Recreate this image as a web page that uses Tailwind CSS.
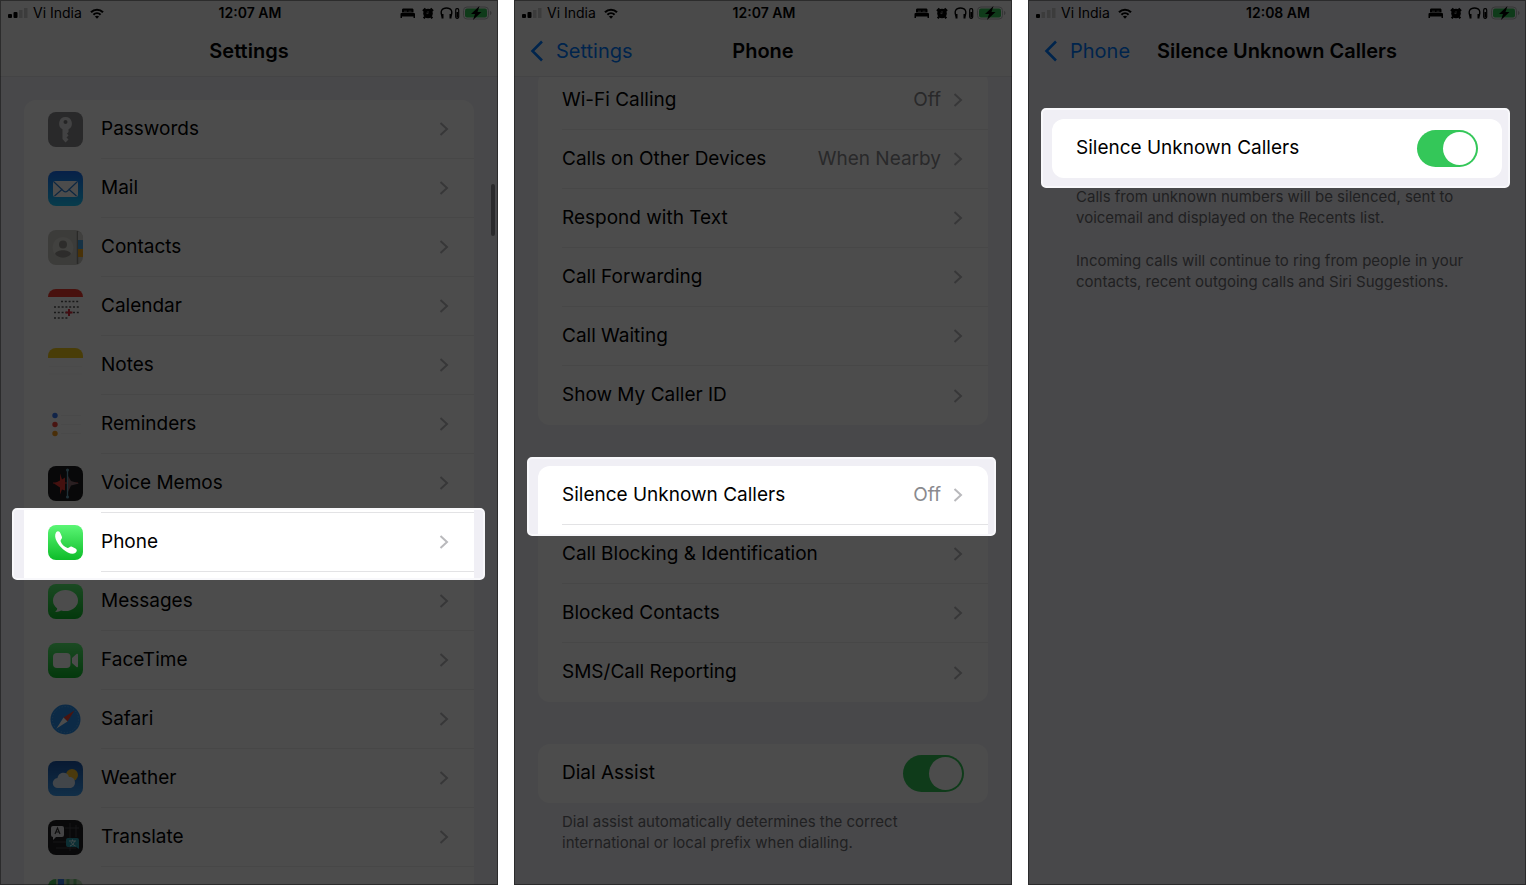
<!DOCTYPE html>
<html lang="en">
<head>
    <meta charset="UTF-8">
    <meta name="viewport" content="width=device-width, initial-scale=1.0">
    <title>Silence Unknown Callers</title>
    <script src="https://cdn.jsdelivr.net/npm/@tailwindcss/browser@4"></script>
</head>
<body class="bg-white font-[Inter,sans-serif] text-black">

    <!-- shared icons -->
    <svg class="absolute size-0">
        <symbol id="wifi" viewBox="0 0 14 11">
            <path d="M1 4.2C4.4.9 9.6.9 13 4.2" fill="none" stroke="currentColor" stroke-width="2.200"/>
            <path d="M3.4 6.8c2-2 5.2-2 7.2 0" fill="none" stroke="currentColor" stroke-width="2"/>
            <path d="M7 10.8 4.9 8.6c1.2-1 3-1 4.2 0z" fill="currentColor"/>
        </symbol>
        <symbol id="status" viewBox="0 0 92 14">
            <path d="M3.500 2.500h8.500c1 0 1.500.5 1.500 1.500v2.500H2V4c0-1 .5-1.500 1.500-1.500zM1.500 7h12.500a1 1 0 0 1 1 1v4h-1.500v-1.500H2V12H.5V8a1 1 0 0 1 1-1z" fill="currentColor"/>
            <path d="M4 5.200h3M8.500 5.200h3" stroke="#999" stroke-width=".8"/>
            <circle cx="28" cy="7.500" r="4.800" fill="currentColor"/>
            <path d="M23 5l2.500-2.500M33 5l-2.500-2.500M25 10.500l-1.200 1.800M31 10.500l1.200 1.800" stroke="currentColor" stroke-width="2.200"/>
            <path d="M28 5v2.800l-1.800-.8" fill="none" stroke="#999" stroke-width=".8"/>
            <path d="M42.500 11C39.500 5 42 2 46.500 2s7 3 4 9" fill="none" stroke="currentColor" stroke-width="1.400"/>
            <path d="M42.500 8v4.500M50.500 8v4.500" stroke="currentColor" stroke-width="2"/>
            <rect x="55.700" y="2.700" width="3" height="9.600" rx="1.200" fill="none" stroke="currentColor" stroke-width="1.200"/>
            <path d="M57.200 6v5.500" stroke="currentColor" stroke-width="1.600"/>
            <rect x="63.500" y="1" width="25" height="12" rx="3.500" fill="none" stroke="#b5b5b8"/>
            <rect x="65" y="2.500" width="22" height="9" rx="2" fill="#34c759"/>
            <path d="M90 5c2 .5 2 3.500 0 4z" fill="#b5b5b8"/>
            <path d="M79.500 0l-8.500 8h4l-2 6 8.500-8h-4z" fill="currentColor"/>
        </symbol>
        <symbol id="chevron" viewBox="0 0 10 16">
            <path d="M1.500 2l6.500 6-6.500 6" fill="none" stroke="currentColor" stroke-width="2"/>
        </symbol>
        <symbol id="back" viewBox="0 0 14 22">
            <path d="M12 1.500L2.500 11 12 20.500" fill="none" stroke="currentColor" stroke-width="2.600"/>
        </symbol>
        <linearGradient id="green" x2="0" y2="1"><stop stop-color="#5bf675"/><stop offset="1" stop-color="#0dbc29"/></linearGradient>
        <linearGradient id="blue" x2="0" y2="1"><stop stop-color="#1a6df0"/><stop offset="1" stop-color="#1ac8fc"/></linearGradient>
        <linearGradient id="sky" x2="0" y2="1"><stop stop-color="#1c56a8"/><stop offset="1" stop-color="#3a9cf0"/></linearGradient>
    </svg>

    <main class="flex h-screen gap-4 overflow-hidden">

        <!-- Settings -->
        <section class="relative isolate min-w-0 flex-1 overflow-hidden bg-[#f2f2f7]">
            <header class="relative z-5 h-[77px] border-b border-[#e4e4e6] bg-[#f9f9f9]">
                <div class="grid h-[26px] grid-cols-[1fr_auto_1fr] items-center pr-[6px] pl-2 text-sm">
                    <div class="flex items-center gap-2">
                        <div class="flex items-center gap-1">
                            <svg class="h-3 w-5" viewBox="0 0 20 12"><rect y="7" width="4" height="4" rx="1"/><rect x="5.500" y="5" width="4" height="6" rx="1"/><path d="M11 3h3.500v8H11zM16 1h3.500v10H16z" fill="#c8c8ca"/></svg>
                            <span class="ml-px">Vi India</span>
                        </div>
                        <svg class="h-[11px] w-[14px]"><use href="#wifi"/></svg>
                    </div>
                    <span class="font-semibold">12:07 AM</span>
                    <svg class="h-[14px] w-[92px] justify-self-end"><use href="#status"/></svg>
                </div>
                <h1 class="flex h-[50px] items-center justify-center text-xl font-semibold">Settings</h1>
            </header>

            <nav class="mx-6 mt-[23px] rounded-xl bg-white text-[19px]">
                <a href="#" class="flex h-[59px] items-center pl-6">
                    <svg class="size-[35px]" viewBox="0 0 35 35"><rect width="35" height="35" rx="8" fill="#8a8a8d"/><path d="M17.500 5a6.500 6.500 0 0 0-3 12.200V27l3 3.500 3-3-2-2 2-2-1.500-2 1.500-1.500v-2.800A6.500 6.500 0 0 0 17.500 5z" fill="#dededf"/><circle cx="17.500" cy="10" r="2" fill="#7b7b7d"/></svg>
                    <span class="ml-[18px] flex h-full flex-1 items-center justify-between border-b border-[#eeeeef] pr-[25px]">Passwords<svg class="h-4 w-[10px] text-[#b9b9bc]"><use href="#chevron"/></svg></span>
                </a>
                <a href="#" class="flex h-[59px] items-center pl-6">
                    <svg class="size-[35px]" viewBox="0 0 35 35"><rect width="35" height="35" rx="8" fill="url(#blue)"/><rect x="5" y="10" width="25" height="16" rx="2.500" fill="#fff"/><path d="M6 11l9.500 9c1.300 1.200 2.700 1.200 4 0L29 11M6.500 25l8-7M28.500 25l-8-7" fill="none" stroke="#2a80d8" stroke-width="1.200"/></svg>
                    <span class="ml-[18px] flex h-full flex-1 items-center justify-between border-b border-[#eeeeef] pr-[25px]">Mail<svg class="h-4 w-[10px] text-[#b9b9bc]"><use href="#chevron"/></svg></span>
                </a>
                <a href="#" class="flex h-[59px] items-center pl-6">
                    <svg class="size-[35px]" viewBox="0 0 35 35"><rect width="35" height="35" rx="8" fill="#c9c8c2"/><path d="M29.500 1v33" stroke="#8e8d88" stroke-width="1.500"/><path d="M30 1.500c3 1 5 3.500 5 7V10h-5z" fill="#d5d5d2"/><path d="M30 10h5v9h-5z" fill="#4aa7e8"/><path d="M30 19h5v8h-5z" fill="#f3a71c"/><circle cx="15" cy="17.500" r="10.500" fill="#dad9d2"/><circle cx="15" cy="14.500" r="4" fill="#96958f"/><path d="M7 24c1.500-5 14.500-5 16 0-4 5-12 5-16 0z" fill="#96958f"/></svg>
                    <span class="ml-[18px] flex h-full flex-1 items-center justify-between border-b border-[#eeeeef] pr-[25px]">Contacts<svg class="h-4 w-[10px] text-[#b9b9bc]"><use href="#chevron"/></svg></span>
                </a>
                <a href="#" class="flex h-[59px] items-center pl-6">
                    <svg class="size-[35px]" viewBox="0 0 35 35"><rect width="35" height="35" rx="8" fill="#fff"/><path d="M0 8a8 8 0 0 1 8-8h19a8 8 0 0 1 8 8z" fill="#f0392f"/><path d="M13 12.500h18M6 18h25M6 23.500h25M6 29h15" stroke="#555" stroke-width="1.500" stroke-dasharray="2 1.800"/><path d="M21 20v7M17.500 23.500h7" stroke="#e02c3c" stroke-width="2"/></svg>
                    <span class="ml-[18px] flex h-full flex-1 items-center justify-between border-b border-[#eeeeef] pr-[25px]">Calendar<svg class="h-4 w-[10px] text-[#b9b9bc]"><use href="#chevron"/></svg></span>
                </a>
                <a href="#" class="flex h-[59px] items-center pl-6">
                    <svg class="size-[35px]" viewBox="0 0 35 35"><rect width="35" height="35" rx="8" fill="#fff"/><path d="M0 10V8a8 8 0 0 1 8-8h19a8 8 0 0 1 8 8v2z" fill="#f4cc1c"/><path d="M1 18.500h33M1 26h33" stroke="#f7f7f7"/></svg>
                    <span class="ml-[18px] flex h-full flex-1 items-center justify-between border-b border-[#eeeeef] pr-[25px]">Notes<svg class="h-4 w-[10px] text-[#b9b9bc]"><use href="#chevron"/></svg></span>
                </a>
                <a href="#" class="flex h-[59px] items-center pl-6">
                    <svg class="size-[35px]" viewBox="0 0 35 35"><rect width="35" height="35" rx="8" fill="#fff"/><circle cx="7" cy="8.500" r="2.700" fill="#3a78f0"/><circle cx="7" cy="17.500" r="2.700" fill="#f0463c"/><circle cx="7" cy="26.500" r="2.700" fill="#f39a1c"/><path d="M13 8.500h20M13 17.500h20M13 26.500h20" stroke="#f5f5f6"/></svg>
                    <span class="ml-[18px] flex h-full flex-1 items-center justify-between border-b border-[#eeeeef] pr-[25px]">Reminders<svg class="h-4 w-[10px] text-[#b9b9bc]"><use href="#chevron"/></svg></span>
                </a>
                <a href="#" class="flex h-[59px] items-center pl-6">
                    <svg class="size-[35px]" viewBox="0 0 35 35"><rect width="35" height="35" rx="8" fill="#1c1c20"/><path d="M5 17h25" stroke="#a53030" stroke-width="1.500"/><path d="M6 17.500l6-3v-7l2 6 3-2v13l-3-1-2 5v-7z" fill="#e83a32"/><path d="M19.500 3v29" stroke="#6ba5ba" stroke-width="1.300"/><path d="M20 10l3 5 8 2.500-8 2L20 26z" fill="#8a6a70"/><circle cx="19.500" cy="4" r="1.500" fill="#6ba5ba"/><circle cx="19.500" cy="31" r="1.500" fill="#6ba5ba"/></svg>
                    <span class="ml-[18px] flex h-full flex-1 items-center justify-between border-b border-[#eeeeef] pr-[25px]">Voice Memos<svg class="h-4 w-[10px] text-[#b9b9bc]"><use href="#chevron"/></svg></span>
                </a>

                <!-- highlighted row -->
                <div class="relative z-20">
                    <div class="absolute -top-[5px] -right-[11px] -bottom-[8px] -left-[12px] rounded-[5px] border-2 border-[#f8f8fb] bg-[#f0eff5] pr-[9px] pl-[10px]">
                        <div class="h-full border-t-2 border-white bg-white"><div class="ml-[77px] h-px bg-[#e3e3e5]"></div></div>
                    </div>
                    <a href="#" class="relative flex h-[59px] items-center pl-6">
                        <svg class="size-[35px]" viewBox="0 0 35 35"><rect width="35" height="35" rx="8" fill="url(#green)"/><path d="M8 7.500c1.500-2 3.500-1.500 4.500 1l1.500 3.500c.5 1.500-1.500 2.500-1.500 4 1 3.500 3.500 5.500 7 7 1.500.3 2.500-2 4-1.500l4 2c2 1 1.500 3 0 4.200-3 2.300-8 .3-12.500-3.500S5 12.500 8 7.500z" fill="#fff"/></svg>
                        <span class="ml-[18px] flex h-full flex-1 items-center justify-between border-b border-[#e3e3e5] pr-[25px]">Phone<svg class="h-4 w-[10px] text-[#b9b9bc]"><use href="#chevron"/></svg></span>
                    </a>
                </div>

                <a href="#" class="flex h-[59px] items-center pl-6">
                    <svg class="size-[35px]" viewBox="0 0 35 35"><rect width="35" height="35" rx="8" fill="url(#green)"/><ellipse cx="17.500" cy="16.500" rx="12.500" ry="10.500" fill="#fff"/><path d="M9 22c1 3-.5 5-2 6 3.500 0 6-1 8-3z" fill="#fff"/></svg>
                    <span class="ml-[18px] flex h-full flex-1 items-center justify-between border-b border-[#eeeeef] pr-[25px]">Messages<svg class="h-4 w-[10px] text-[#b9b9bc]"><use href="#chevron"/></svg></span>
                </a>
                <a href="#" class="flex h-[59px] items-center pl-6">
                    <svg class="size-[35px]" viewBox="0 0 35 35"><rect width="35" height="35" rx="8" fill="url(#green)"/><rect x="5" y="10" width="17.500" height="15" rx="4" fill="#fff"/><path d="M24 15l4.500-4c.8-.6 1.500-.3 1.500.7v11.600c0 1-.7 1.300-1.500.7L24 20z" fill="#fff"/></svg>
                    <span class="ml-[18px] flex h-full flex-1 items-center justify-between border-b border-[#eeeeef] pr-[25px]">FaceTime<svg class="h-4 w-[10px] text-[#b9b9bc]"><use href="#chevron"/></svg></span>
                </a>
                <a href="#" class="flex h-[59px] items-center pl-6">
                    <svg class="size-[35px]" viewBox="0 0 35 35"><rect width="35" height="35" rx="8" fill="#fff"/><circle cx="17.500" cy="17.500" r="15" fill="#2a8eea"/><circle cx="17.500" cy="17.500" r="13" fill="none" stroke="#5fb5f5" stroke-dasharray="1 2"/><path d="M26.500 8.500L15.500 15.500l4 4z" fill="#f04438"/><path d="M8.500 26.500l7-11 4 4z" fill="#fff"/></svg>
                    <span class="ml-[18px] flex h-full flex-1 items-center justify-between border-b border-[#eeeeef] pr-[25px]">Safari<svg class="h-4 w-[10px] text-[#b9b9bc]"><use href="#chevron"/></svg></span>
                </a>
                <a href="#" class="flex h-[59px] items-center pl-6">
                    <svg class="size-[35px]" viewBox="0 0 35 35"><rect width="35" height="35" rx="8" fill="url(#sky)"/><circle cx="24" cy="14" r="6" fill="#fbc22c"/><path d="M10 27a5 5 0 0 1-.5-10c1-6.500 10-7 11.500-1 3.500-.5 6 2 6 5.500 0 3-2 5.500-5 5.500z" fill="#dce9f7"/></svg>
                    <span class="ml-[18px] flex h-full flex-1 items-center justify-between border-b border-[#eeeeef] pr-[25px]">Weather<svg class="h-4 w-[10px] text-[#b9b9bc]"><use href="#chevron"/></svg></span>
                </a>
                <a href="#" class="flex h-[59px] items-center pl-6">
                    <svg class="size-[35px]" viewBox="0 0 35 35"><rect width="35" height="35" rx="8" fill="#202022"/><path d="M17 8h14M22 3v28M5 22h14M8 28h20M28 5v12" stroke="#4b4b4e"/><path d="M5 6h9a2 2 0 0 1 2 2v7a2 2 0 0 1-2 2H8l-3 3v-3a2 2 0 0 1-2-2V8a2 2 0 0 1 2-2z" fill="#e5e5e7"/><path d="M7 14l2.500-6 2.500 6M8 12h3" fill="none" stroke="#333" stroke-width="1.200"/><path d="M20 18h9a2 2 0 0 1 2 2v9l-3-2h-8a2 2 0 0 1-2-2v-5a2 2 0 0 1 2-2z" fill="#2a9fb0"/><path d="M21 21h7M24.500 19.500V21M22 26c3-1 4-3 4.500-5M23 22c1 2 3 3.500 4.500 4" fill="none" stroke="#d5f2f5"/></svg>
                    <span class="ml-[18px] flex h-full flex-1 items-center justify-between border-b border-[#eeeeef] pr-[25px]">Translate<svg class="h-4 w-[10px] text-[#b9b9bc]"><use href="#chevron"/></svg></span>
                </a>
                <a href="#" aria-label="Maps" class="flex h-[59px] items-center pl-6">
                    <svg class="size-[35px]" viewBox="0 0 35 35"><rect width="35" height="35" rx="8" fill="#b9dcb5"/><path d="M0 35V8a8 8 0 0 1 8-8v35z" fill="#4cc35c"/><path d="M10 0h6v35h-6z" fill="#3a7de8"/><path d="M20 0v35M27 0v35" stroke="#6fc478" stroke-width="3"/></svg>
                </a>
            </nav>

            <div class="absolute top-[184px] right-[3px] h-[52px] w-1 rounded-full bg-[#8e8e93]"></div>
            <div class="pointer-events-none absolute inset-0 z-10 border border-black/40 bg-black/70"></div>
        </section>

        <!-- Phone -->
        <section class="relative isolate min-w-0 flex-1 overflow-hidden bg-[#f2f2f7]">
            <header class="relative z-5 h-[77px] border-b border-[#e4e4e6] bg-[#f9f9f9]">
                <div class="grid h-[26px] grid-cols-[1fr_auto_1fr] items-center pr-[6px] pl-2 text-sm">
                    <div class="flex items-center gap-2">
                        <div class="flex items-center gap-1">
                            <svg class="h-3 w-5" viewBox="0 0 20 12"><rect y="7" width="4" height="4" rx="1"/><rect x="5.500" y="5" width="4" height="6" rx="1"/><path d="M11 3h3.500v8H11zM16 1h3.500v10H16z" fill="#c8c8ca"/></svg>
                            <span class="ml-px">Vi India</span>
                        </div>
                        <svg class="h-[11px] w-[14px]"><use href="#wifi"/></svg>
                    </div>
                    <span class="font-semibold">12:07 AM</span>
                    <svg class="h-[14px] w-[92px] justify-self-end"><use href="#status"/></svg>
                </div>
                <div class="grid h-[50px] grid-cols-[1fr_auto_1fr] items-center px-4 text-xl">
                    <a href="#" class="flex items-center gap-3 text-[#007aff]"><svg class="h-[22px] w-[14px]"><use href="#back"/></svg>Settings</a>
                    <h1 class="font-semibold">Phone</h1>
                </div>
            </header>

            <nav class="mx-6 -mt-[6px] rounded-xl bg-white pl-6 text-[19px]">
                <a href="#" class="flex h-[59px] items-center border-b border-[#eeeeef] pr-[25px]">Wi-Fi Calling<span class="mr-3 ml-auto text-[#8a8a8e]">Off</span><svg class="h-4 w-[10px] text-[#b9b9bc]"><use href="#chevron"/></svg></a>
                <a href="#" class="flex h-[59px] items-center border-b border-[#eeeeef] pr-[25px]">Calls on Other Devices<span class="mr-3 ml-auto text-[#8a8a8e]">When Nearby</span><svg class="h-4 w-[10px] text-[#b9b9bc]"><use href="#chevron"/></svg></a>
                <a href="#" class="flex h-[59px] items-center justify-between border-b border-[#eeeeef] pr-[25px]">Respond with Text<svg class="h-4 w-[10px] text-[#b9b9bc]"><use href="#chevron"/></svg></a>
                <a href="#" class="flex h-[59px] items-center justify-between border-b border-[#eeeeef] pr-[25px]">Call Forwarding<svg class="h-4 w-[10px] text-[#b9b9bc]"><use href="#chevron"/></svg></a>
                <a href="#" class="flex h-[59px] items-center justify-between border-b border-[#eeeeef] pr-[25px]">Call Waiting<svg class="h-4 w-[10px] text-[#b9b9bc]"><use href="#chevron"/></svg></a>
                <a href="#" class="flex h-[59px] items-center justify-between pr-[25px]">Show My Caller ID<svg class="h-4 w-[10px] text-[#b9b9bc]"><use href="#chevron"/></svg></a>
            </nav>

            <nav class="mx-6 mt-[41px] rounded-xl bg-white text-[19px]">
                <!-- highlighted row -->
                <div class="relative z-20">
                    <div class="absolute -top-[9px] -right-[8px] -bottom-[11px] -left-[11px] rounded-[5px] border-2 border-[#f8f8fb] bg-[#f0eff5] pt-[7px] pr-[6px] pl-[9px]">
                        <div class="h-full rounded-t-xl bg-white"></div>
                    </div>
                    <div class="relative pl-6">
                        <a href="#" class="flex h-[59px] items-center border-b border-[#e3e3e5] pr-[25px]">Silence Unknown Callers<span class="mr-3 ml-auto text-[#8a8a8e]">Off</span><svg class="h-4 w-[10px] text-[#b9b9bc]"><use href="#chevron"/></svg></a>
                    </div>
                </div>
                <div class="pl-6">
                    <a href="#" class="flex h-[59px] items-center justify-between border-b border-[#eeeeef] pr-[25px]">Call Blocking &amp; Identification<svg class="h-4 w-[10px] text-[#b9b9bc]"><use href="#chevron"/></svg></a>
                    <a href="#" class="flex h-[59px] items-center justify-between border-b border-[#eeeeef] pr-[25px]">Blocked Contacts<svg class="h-4 w-[10px] text-[#b9b9bc]"><use href="#chevron"/></svg></a>
                    <a href="#" class="flex h-[59px] items-center justify-between pr-[25px]">SMS/Call Reporting<svg class="h-4 w-[10px] text-[#b9b9bc]"><use href="#chevron"/></svg></a>
                </div>
            </nav>

            <div class="mx-6 mt-[42px] flex h-[59px] items-center justify-between rounded-xl bg-white pr-6 pl-6 text-[19px]">
                <label for="dial-assist">Dial Assist</label>
                <input id="dial-assist" type="checkbox" role="switch" checked class="relative h-[37px] w-[61px] appearance-none rounded-full bg-[#b9b9bc] before:absolute before:top-[2px] before:left-[2px] before:size-[33px] before:rounded-full before:bg-white checked:bg-[#34c759] checked:before:left-[26px]">
            </div>
            <p class="mx-12 mt-2 text-[15px] leading-[21px] text-[#6d6d72]">Dial assist automatically determines the correct<br>international or local prefix when dialling.</p>

            <div class="pointer-events-none absolute inset-0 z-10 border border-black/40 bg-black/70"></div>
        </section>

        <!-- Silence Unknown Callers -->
        <section class="relative isolate min-w-0 flex-1 overflow-hidden bg-[#f2f2f7]">
            <header class="h-[77px]">
                <div class="grid h-[26px] grid-cols-[1fr_auto_1fr] items-center pr-[6px] pl-2 text-sm">
                    <div class="flex items-center gap-2">
                        <div class="flex items-center gap-1">
                            <svg class="h-3 w-5" viewBox="0 0 20 12"><rect y="7" width="4" height="4" rx="1"/><path d="M5.500 5H9v6H5.500zM11 3h3.500v8H11zM16 1h3.500v10H16z" fill="#c8c8ca"/></svg>
                            <span class="ml-px">Vi India</span>
                        </div>
                        <svg class="h-[11px] w-[14px]"><use href="#wifi"/></svg>
                    </div>
                    <span class="font-semibold">12:08 AM</span>
                    <svg class="h-[14px] w-[92px] justify-self-end"><use href="#status"/></svg>
                </div>
                <div class="grid h-[50px] grid-cols-[1fr_auto_1fr] items-center px-4 text-xl">
                    <a href="#" class="flex items-center gap-3 text-[#007aff]"><svg class="h-[22px] w-[14px]"><use href="#back"/></svg>Phone</a>
                    <h1 class="font-semibold">Silence Unknown Callers</h1>
                </div>
            </header>

            <!-- highlighted row -->
            <div class="relative z-20 mx-6 mt-[42px]">
                <div class="absolute -top-[11px] -right-[8px] -bottom-[10px] -left-[11px] rounded-[5px] border-2 border-[#f8f8fb] bg-[#f0eff5]"></div>
                <div class="relative flex h-[59px] items-center justify-between rounded-xl bg-white pr-6 pl-6 text-[19px]">
                    <label for="silence">Silence Unknown Callers</label>
                    <input id="silence" type="checkbox" role="switch" checked class="relative h-[37px] w-[61px] appearance-none rounded-full bg-[#b9b9bc] before:absolute before:top-[2px] before:left-[2px] before:size-[33px] before:rounded-full before:bg-white checked:bg-[#34c759] checked:before:left-[26px]">
                </div>
            </div>
            <div class="mx-12 mt-2 space-y-[22px] text-[15px] leading-[21px] text-[#6d6d72]">
                <p>Calls from unknown numbers will be silenced, sent to<br>voicemail and displayed on the Recents list.</p>
                <p>Incoming calls will continue to ring from people in your<br>contacts, recent outgoing calls and Siri Suggestions.</p>
            </div>

            <div class="pointer-events-none absolute inset-0 z-10 border border-black/40 bg-black/70"></div>
        </section>
    </main>
</body>
</html>
